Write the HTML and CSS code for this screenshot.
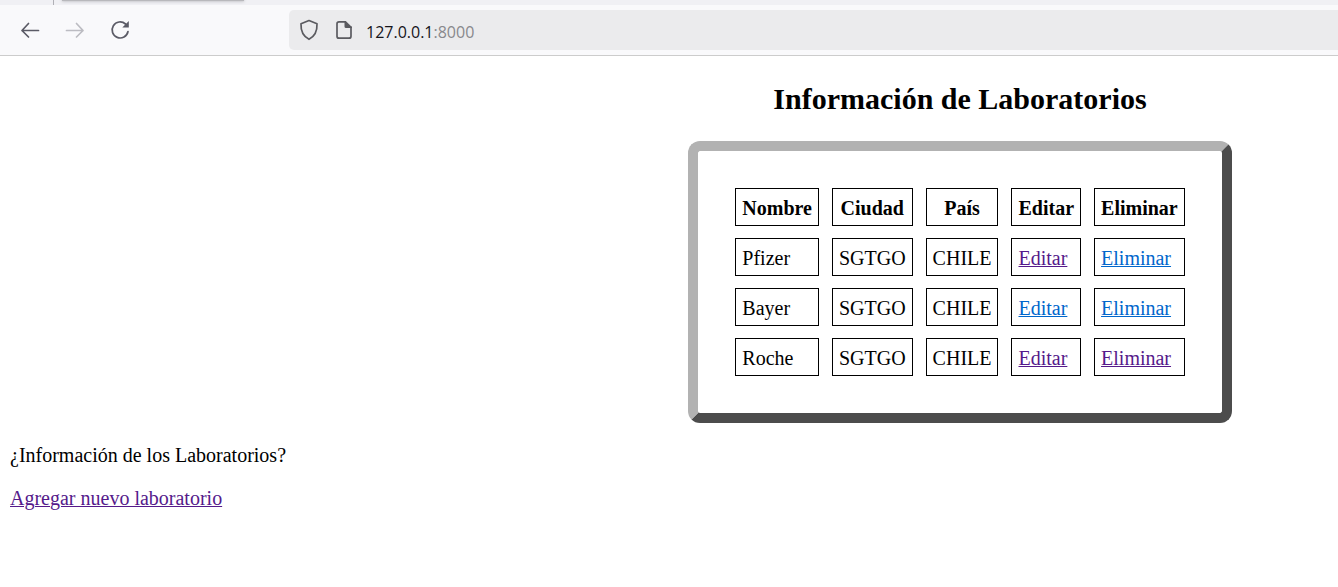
FILE: index.html
```html
<!DOCTYPE html>
<html lang="es">
<head>
<meta charset="utf-8">
<title>Información de Laboratorios</title>
<link rel="stylesheet" href="styles.css">
</head>
<body>
<header class="browser">
  <div class="tabstrip"><span class="tab-divider"></span><span class="tab"></span></div>
  <div class="toolbar">
    <nav class="nav" aria-label="Navegación">
      <button class="nav-button" type="button" aria-label="Atrás">
        <svg width="20" height="20" viewBox="0 0 20 20"><path d="M18.500 10.500H2M8.500 3.500L2 10.500L8.500 17"/></svg>
      </button>
      <button class="nav-button" type="button" aria-label="Adelante" disabled>
        <svg width="20" height="20" viewBox="0 0 20 20"><path d="M1.500 10.500H18M11.500 3.500L18 10.500L11.500 17"/></svg>
      </button>
      <button class="nav-button" type="button" aria-label="Recargar">
        <svg width="20" height="20" viewBox="0 0 20 20"><path d="M18 11.500A8 8 0 1 1 15.500 4"/><path class="solid" d="M18.800 1V7.500H12.300Z"/></svg>
      </button>
    </nav>
    <div class="urlbar">
      <div class="url-icons">
        <svg width="20" height="22" viewBox="0 0 20 22"><path d="M10 1.500L18 4.800C18.300 11.500 16.500 17 10 20.300C3.500 17 1.700 11.500 2 4.800Z"/></svg>
        <svg width="20" height="22" viewBox="0 0 20 22"><path d="M11 2.800H5Q3 2.800 3 4.800V17.200Q3 19.200 5 19.200H15Q17 19.200 17 17.200V8"/><path class="solid" d="M10.500 1.900H11.800L17.900 8V9H12Q10.500 9 10.500 7.500Z"/></svg>
      </div>
      <div class="address">127.0.0.1<span class="port">:8000</span></div>
    </div>
  </div>
</header>
<main class="page">
  <section class="labs">
    <h2 class="title">Información de Laboratorios</h2>
    <table class="lab-table">
      <thead>
        <tr><th>Nombre</th><th>Ciudad</th><th>País</th><th>Editar</th><th>Eliminar</th></tr>
      </thead>
      <tbody>
        <tr><td>Pfizer</td><td>SGTGO</td><td>CHILE</td><td><a class="link seen" href="#editar-1">Editar</a></td><td><a class="link" href="#eliminar-1">Eliminar</a></td></tr>
        <tr><td>Bayer</td><td>SGTGO</td><td>CHILE</td><td><a class="link" href="#editar-2">Editar</a></td><td><a class="link" href="#eliminar-2">Eliminar</a></td></tr>
        <tr><td>Roche</td><td>SGTGO</td><td>CHILE</td><td><a class="link seen" href="#editar-3">Editar</a></td><td><a class="link seen" href="#eliminar-3">Eliminar</a></td></tr>
      </tbody>
    </table>
  </section>
  <div class="notes">
    <p class="note">¿Información de los Laboratorios?</p>
    <p class="note"><a class="link seen" href="#nuevo">Agregar nuevo laboratorio</a></p>
  </div>
</main>
</body>
</html>
```
FILE: styles.css
```css
body {
  margin: 0;
  background: #fff;
  color: #000;
  font-family: "Liberation Serif", "Times New Roman", serif;
  font-size: 20px;
  line-height: 23px;
}

/* Browser chrome */
.browser {
  background: #f9f9fb;
  border-bottom: 1px solid #ccc;
}

.tabstrip {
  display: flex;
  height: 5px;
  overflow: hidden;
  background: #f0f0f4;
}

.tab-divider {
  width: 1px;
  margin-left: 53px;
  background: #b0b0b6;
}

.tab {
  width: 182px;
  height: 1px;
  margin-left: 8px;
  background: #b8b8bc;
  box-shadow: 0 0 3px #77777c;
}

.toolbar {
  display: flex;
  padding: 5px 0;
}

.nav {
  display: flex;
  align-items: center;
  gap: 25px;
  flex: none;
  box-sizing: border-box;
  width: 289px;
  padding-left: 20px;
}

.nav-button {
  width: 20px;
  height: 20px;
  padding: 0;
  border: 0;
  background: none;
  color: #5b5b66;
}

.nav-button:disabled {
  color: #bcbcc2;
}

svg {
  display: block;
  flex: none;
  fill: none;
  stroke: currentColor;
  stroke-width: 1.7;
  stroke-linecap: round;
  stroke-linejoin: round;
}

.solid {
  fill: currentColor;
  stroke: none;
}

.urlbar {
  display: flex;
  align-items: center;
  gap: 12px;
  flex: 1;
  height: 40px;
  padding-left: 10px;
  border-radius: 5px 0 0 5px;
  background: #ebebed;
  color: #5b5b60;
}

.url-icons {
  display: flex;
  gap: 15px;
}

.address {
  padding-top: 4px;
  color: #15141a;
  font-family: "Open Sans", "Noto Sans", sans-serif;
  font-size: 16px;
}

.port {
  color: #88888c;
}

/* Document */
.page {
  display: flow-root;
}

.labs {
  display: flex;
  flex-direction: column;
  align-items: center;
  padding-left: 43.5%;
}

.title {
  margin: 26px 0;
  font-size: 30px;
  line-height: 33px;
}

.lab-table {
  padding: 25px 24px;
  border: 10px solid;
  border-color: #b2b2b2 #4c4c4c #4c4c4c #b2b2b2;
  border-radius: 12px;
  border-spacing: 13px 12px;
}

.lab-table th,
.lab-table td {
  padding: 7px 6px 5px;
  border: 1px solid #000;
  line-height: 24px;
}

.notes {
  padding: 1px 10px;
}

.note {
  margin: 20px 0;
}

.link {
  color: #0066cc;
  text-decoration-thickness: 1px;
}

.link.seen {
  color: #551a8b;
}
```
